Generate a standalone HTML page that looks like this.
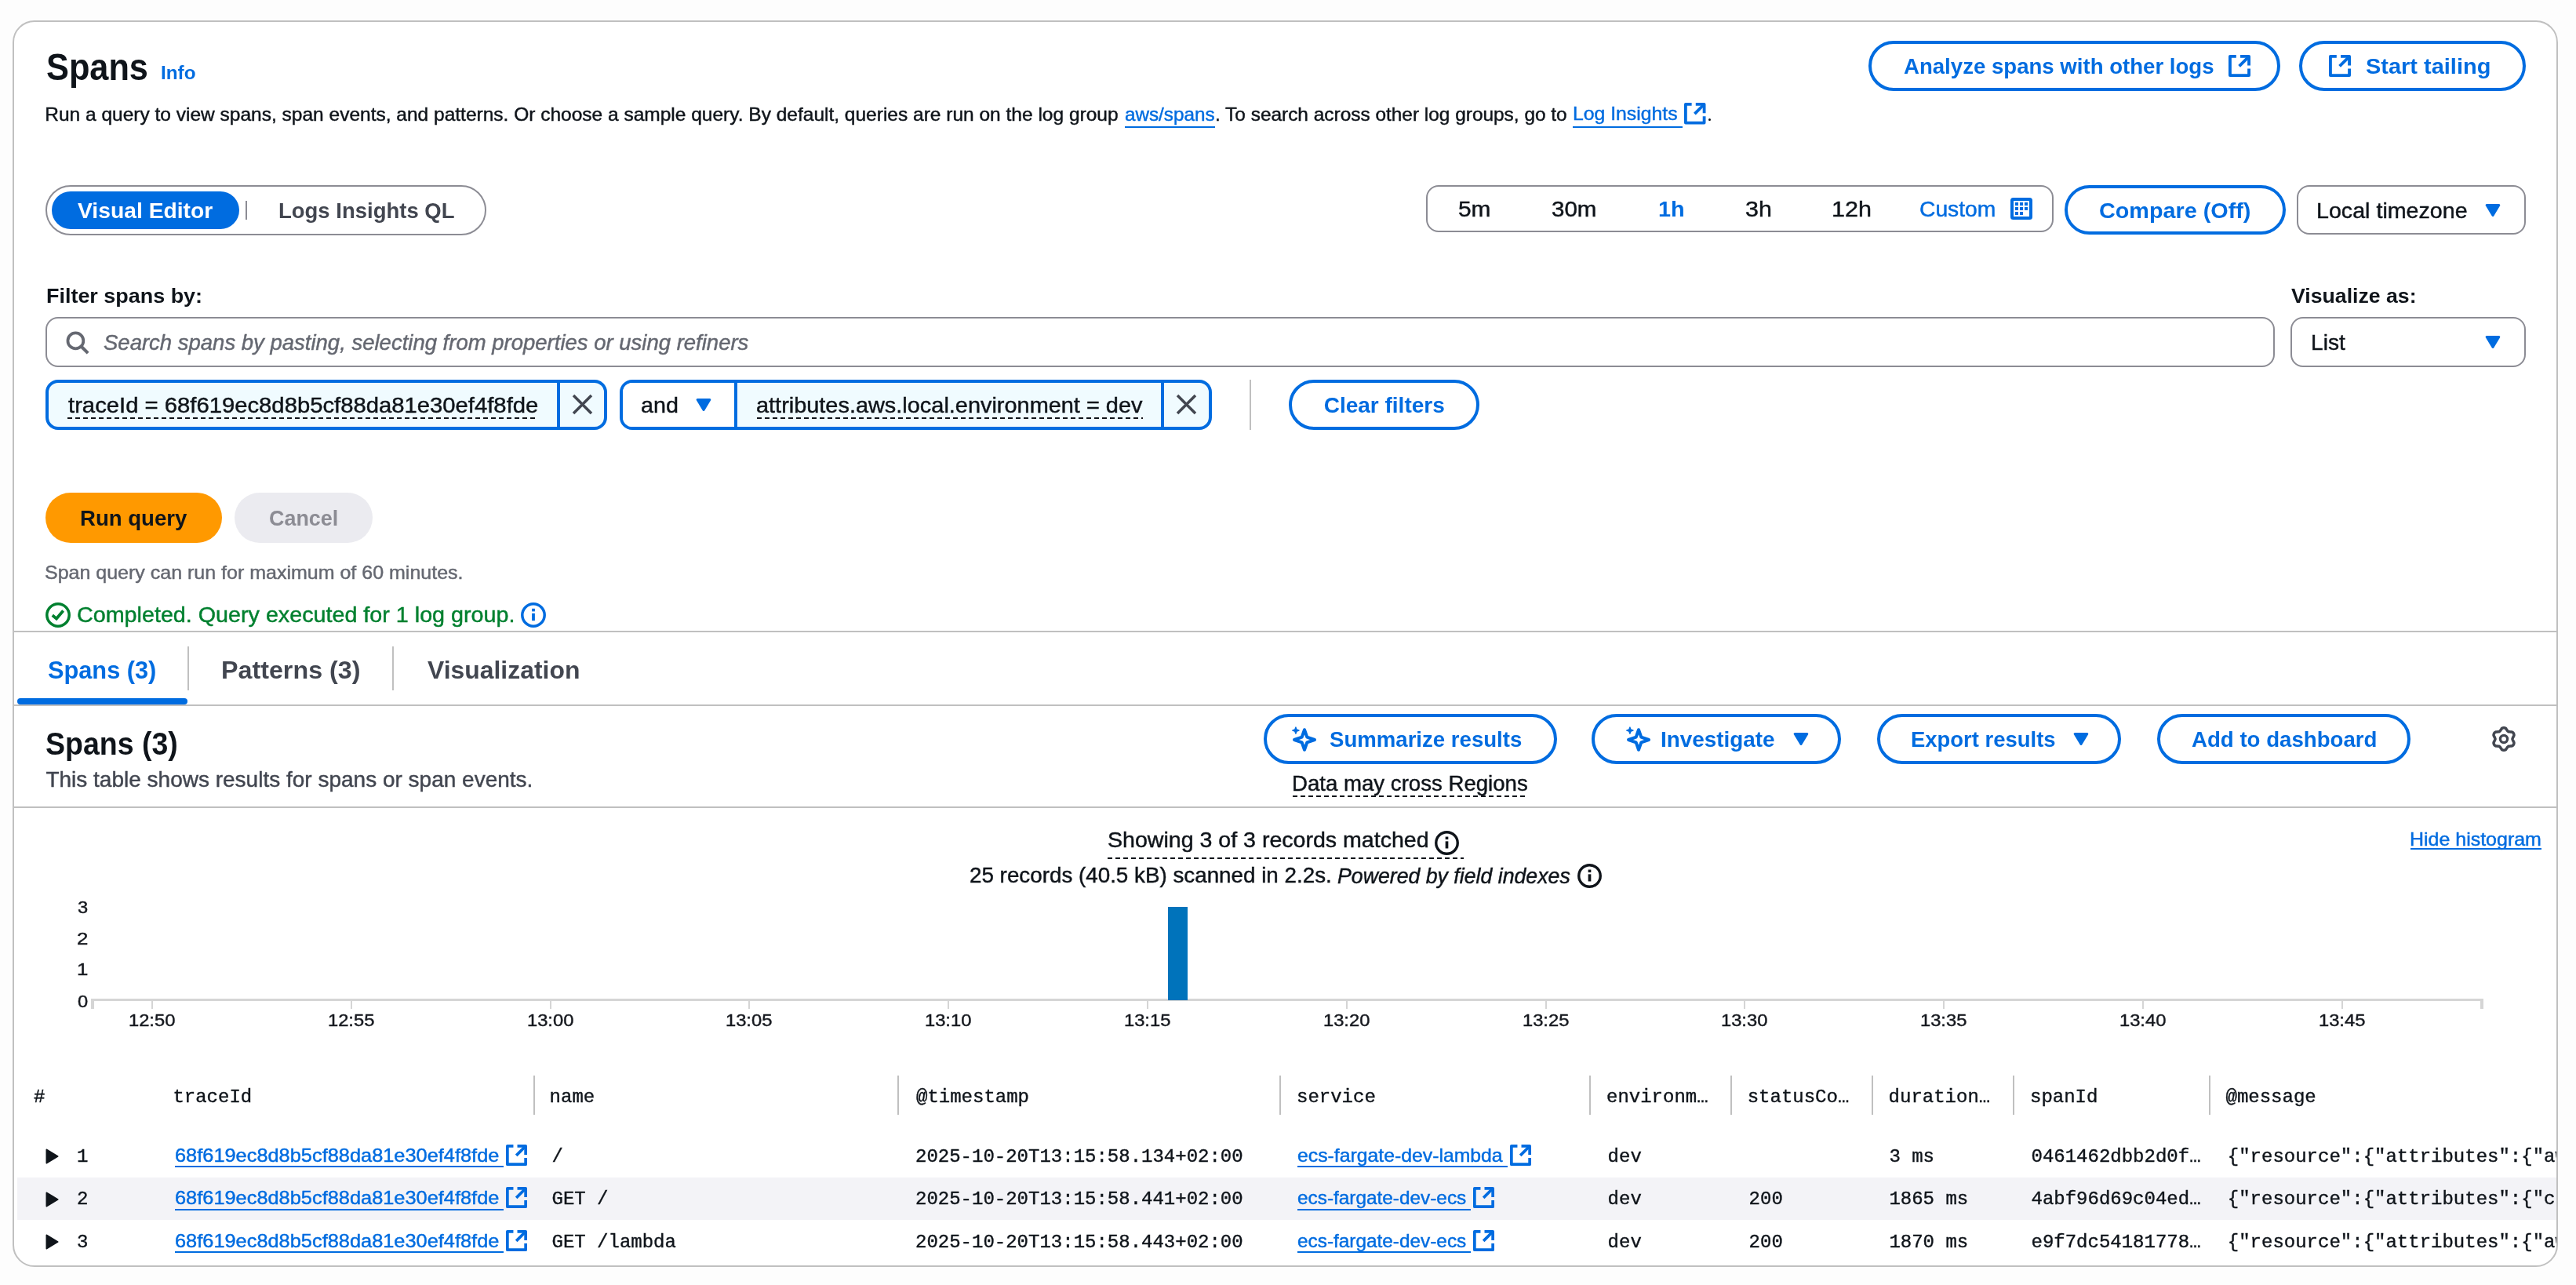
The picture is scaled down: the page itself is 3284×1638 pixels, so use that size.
<!DOCTYPE html>
<html><head><meta charset="utf-8"><title>Spans</title>
<style>
html,body{margin:0;padding:0;}
body{width:3284px;height:1638px;position:relative;overflow:hidden;background:#fdfdfd;font-family:"Liberation Sans",sans-serif;}
#wrap{position:absolute;left:0;top:0;width:3284px;height:1638px;will-change:transform;}
</style></head><body>
<div id="wrap"><div style="position:absolute;left:16px;top:26px;width:3245px;height:1589px;box-sizing:border-box;border:2px solid #c0c0c0;border-radius:28px;background:#fff;"></div><div style="position:absolute;left:59.10px;top:62.16px;font:normal 700 48px/48px 'Liberation Sans';color:#0f141a;white-space:pre;transform:scaleX(0.9020);transform-origin:0 0;">Spans</div><div style="position:absolute;left:204.74px;top:82.43px;font:normal 700 23px/23px 'Liberation Sans';color:#006ce0;white-space:pre;transform:scaleX(1.0560);transform-origin:0 0;">Info</div><div style="position:absolute;left:57.29px;top:133.56px;font:normal 400 24.5px/24.5px 'Liberation Sans';color:#0f141a;white-space:pre;-webkit-text-stroke:0.45px #0f141a;">Run a query to view spans, span events, and patterns. Or choose a sample query. By default, queries are run on the log group </div><div style="position:absolute;left:1434.01px;top:133.56px;font:normal 400 24.5px/24.5px 'Liberation Sans';color:#006ce0;white-space:pre;transform:scaleX(0.9895);transform-origin:0 0;-webkit-text-stroke:0.45px #006ce0;">aws/spans</div><div style="position:absolute;left:1434px;top:161px;width:115px;height:2px;background:#006ce0"></div><div style="position:absolute;left:1549.01px;top:133.56px;font:normal 400 24.5px/24.5px 'Liberation Sans';color:#0f141a;white-space:pre;transform:scaleX(0.9963);transform-origin:0 0;-webkit-text-stroke:0.45px #0f141a;">. To search across other log groups, go to</div><div style="position:absolute;left:2004.68px;top:133.36px;font:normal 400 24.5px/24.5px 'Liberation Sans';color:#006ce0;white-space:pre;transform:scaleX(1.0110);transform-origin:0 0;-webkit-text-stroke:0.45px #006ce0;">Log Insights</div><div style="position:absolute;left:2005px;top:161px;width:140px;height:2px;background:#006ce0"></div><svg style="position:absolute;left:2147px;top:131px;" width="27.5" height="27.5" viewBox="0 0 16 16"><g fill="none" stroke="#006ce0" stroke-width="2.2" stroke-linejoin="round"><path d="M5.6 1.1H1.1v13.8h13.8V10"/><path d="M8.6 1.1h6.3v6.6"/><path d="M7.8 8.2l6.6-6.6"/></g></svg><div style="position:absolute;left:2178px;top:151px;width:3px;height:3px;background:#0f141a;border-radius:2px"></div><div style="position:absolute;left:2382px;top:52px;width:525px;height:64px;box-sizing:border-box;border:4px solid #006ce0;border-radius:32.0px;background:#fff"></div><div style="position:absolute;left:2426.60px;top:70.59px;font:normal 700 28px/28px 'Liberation Sans';color:#006ce0;white-space:pre;transform:scaleX(0.9854);transform-origin:0 0;">Analyze spans with other logs</div><svg style="position:absolute;left:2841px;top:70px;" width="28" height="28" viewBox="0 0 16 16"><g fill="none" stroke="#006ce0" stroke-width="2.2" stroke-linejoin="round"><path d="M5.6 1.1H1.1v13.8h13.8V10"/><path d="M8.6 1.1h6.3v6.6"/><path d="M7.8 8.2l6.6-6.6"/></g></svg><div style="position:absolute;left:2931px;top:52px;width:289px;height:64px;box-sizing:border-box;border:4px solid #006ce0;border-radius:32.0px;background:#fff"></div><svg style="position:absolute;left:2969px;top:70px;" width="28" height="28" viewBox="0 0 16 16"><g fill="none" stroke="#006ce0" stroke-width="2.2" stroke-linejoin="round"><path d="M5.6 1.1H1.1v13.8h13.8V10"/><path d="M8.6 1.1h6.3v6.6"/><path d="M7.8 8.2l6.6-6.6"/></g></svg><div style="position:absolute;left:3016.30px;top:70.69px;font:normal 700 28px/28px 'Liberation Sans';color:#006ce0;white-space:pre;transform:scaleX(1.0346);transform-origin:0 0;">Start tailing</div><div style="position:absolute;left:58px;top:236px;width:562px;height:64px;box-sizing:border-box;border:2px solid #8c8c94;border-radius:32px;background:#fff"></div><div style="position:absolute;left:66px;top:244px;width:239px;height:48px;background:#006ce0;border-radius:24px"></div><div style="position:absolute;left:99.40px;top:254.59px;font:normal 700 28px/28px 'Liberation Sans';color:#fff;white-space:pre;transform:scaleX(1.0097);transform-origin:0 0;">Visual Editor</div><div style="position:absolute;left:313px;top:256px;width:2px;height:24px;background:#8c8c94"></div><div style="position:absolute;left:354.62px;top:254.59px;font:normal 700 28px/28px 'Liberation Sans';color:#424650;white-space:pre;transform:scaleX(0.9817);transform-origin:0 0;">Logs Insights QL</div><div style="position:absolute;left:1818px;top:236px;width:800px;height:60px;box-sizing:border-box;border:2px solid #8c8c94;border-radius:16px;background:#fff"></div><div style="position:absolute;left:1858.93px;top:252.59px;font:normal 400 28px/28px 'Liberation Sans';color:#0f141a;white-space:pre;transform:scaleX(1.0664);transform-origin:0 0;-webkit-text-stroke:0.45px #0f141a;">5m</div><div style="position:absolute;left:1978.25px;top:252.59px;font:normal 400 28px/28px 'Liberation Sans';color:#0f141a;white-space:pre;transform:scaleX(1.0548);transform-origin:0 0;-webkit-text-stroke:0.45px #0f141a;">30m</div><div style="position:absolute;left:2113.97px;top:252.59px;font:normal 700 28px/28px 'Liberation Sans';color:#006ce0;white-space:pre;transform:scaleX(1.0303);transform-origin:0 0;">1h</div><div style="position:absolute;left:2224.92px;top:252.59px;font:normal 400 28px/28px 'Liberation Sans';color:#0f141a;white-space:pre;transform:scaleX(1.0850);transform-origin:0 0;-webkit-text-stroke:0.45px #0f141a;">3h</div><div style="position:absolute;left:2334.82px;top:252.59px;font:normal 400 28px/28px 'Liberation Sans';color:#0f141a;white-space:pre;transform:scaleX(1.0894);transform-origin:0 0;-webkit-text-stroke:0.45px #0f141a;">12h</div><div style="position:absolute;left:2446.99px;top:252.59px;font:normal 400 28px/28px 'Liberation Sans';color:#006ce0;white-space:pre;transform:scaleX(1.0091);transform-origin:0 0;-webkit-text-stroke:0.45px #006ce0;">Custom</div><svg style="position:absolute;left:2563px;top:252px;" width="28" height="28" viewBox="0 0 28 28"><rect x="2" y="2" width="24" height="24" rx="1.5" fill="none" stroke="#006ce0" stroke-width="4"/><rect x="6" y="6" width="4" height="4" fill="#006ce0"/><rect x="12" y="6" width="4" height="4" fill="#006ce0"/><rect x="18" y="6" width="4" height="4" fill="#006ce0"/><rect x="6" y="12" width="4" height="4" fill="#006ce0"/><rect x="12" y="12" width="4" height="4" fill="#006ce0"/><rect x="18" y="12" width="4" height="4" fill="#006ce0"/><rect x="6" y="18" width="4" height="4" fill="#006ce0"/><rect x="12" y="18" width="4" height="4" fill="#006ce0"/></svg><div style="position:absolute;left:2632px;top:236px;width:282px;height:63px;box-sizing:border-box;border:4px solid #006ce0;border-radius:31.5px;background:#fff"></div><div style="position:absolute;left:2675.97px;top:254.59px;font:normal 700 28px/28px 'Liberation Sans';color:#006ce0;white-space:pre;transform:scaleX(1.0275);transform-origin:0 0;">Compare (Off)</div><div style="position:absolute;left:2928px;top:236px;width:292px;height:63px;box-sizing:border-box;border:2px solid #8c8c94;border-radius:16px;background:#fff"></div><div style="position:absolute;left:2952.95px;top:254.59px;font:normal 400 28px/28px 'Liberation Sans';color:#0f141a;white-space:pre;transform:scaleX(1.0228);transform-origin:0 0;-webkit-text-stroke:0.45px #0f141a;">Local timezone</div><svg style="position:absolute;left:3168px;top:260px;" width="20" height="16" viewBox="0 0 20 16"><path d="M2.2 1.5 H17.8 L10 14.5 Z" fill="#006ce0" stroke="#006ce0" stroke-width="3" stroke-linejoin="round"/></svg><div style="position:absolute;left:58.78px;top:363.86px;font:normal 700 26.5px/26.5px 'Liberation Sans';color:#0f141a;white-space:pre;transform:scaleX(1.0164);transform-origin:0 0;">Filter spans by:</div><div style="position:absolute;left:2921.30px;top:363.86px;font:normal 700 26.5px/26.5px 'Liberation Sans';color:#0f141a;white-space:pre;transform:scaleX(1.0059);transform-origin:0 0;">Visualize as:</div><div style="position:absolute;left:58px;top:404px;width:2842px;height:64px;box-sizing:border-box;border:2px solid #8c8c94;border-radius:16px;background:#fff"></div><svg style="position:absolute;left:84px;top:422px;" width="30" height="30" viewBox="0 0 16 16"><circle cx="6.6" cy="6.6" r="5.3" fill="none" stroke="#656871" stroke-width="2"/><path d="M10.5 10.5L15 15" stroke="#656871" stroke-width="2.2"/></svg><div style="position:absolute;left:132.00px;top:423.22px;font:italic 400 27.5px/27.5px 'Liberation Sans';color:#656871;white-space:pre;-webkit-text-stroke:0.45px #656871;">Search spans by pasting, selecting from properties or using refiners</div><div style="position:absolute;left:2920px;top:404px;width:300px;height:64px;box-sizing:border-box;border:2px solid #8c8c94;border-radius:16px;background:#fff"></div><div style="position:absolute;left:2945.69px;top:422.59px;font:normal 400 28px/28px 'Liberation Sans';color:#0f141a;white-space:pre;transform:scaleX(1.0050);transform-origin:0 0;-webkit-text-stroke:0.45px #0f141a;">List</div><svg style="position:absolute;left:3168px;top:428px;" width="20" height="16" viewBox="0 0 20 16"><path d="M2.2 1.5 H17.8 L10 14.5 Z" fill="#006ce0" stroke="#006ce0" stroke-width="3" stroke-linejoin="round"/></svg><div style="position:absolute;left:58px;top:484px;width:716px;height:64px;box-sizing:border-box;border:4px solid #006ce0;border-radius:16px;background:#f0fbff"></div><div style="position:absolute;left:710px;top:484px;width:4px;height:64px;background:#006ce0"></div><div style="position:absolute;left:86.60px;top:502.59px;font:normal 400 28px/28px 'Liberation Sans';color:#0f141a;white-space:pre;transform:scaleX(1.0446);transform-origin:0 0;-webkit-text-stroke:0.45px #0f141a;">traceId = 68f619ec8d8b5cf88da81e30ef4f8fde</div><div style="position:absolute;left:86px;top:532px;width:600px;height:2px;background:repeating-linear-gradient(90deg,#0f141a 0 6px,transparent 6px 10px)"></div><svg style="position:absolute;left:728.5px;top:501.5px;" width="27" height="27" viewBox="0 0 16 16"><path d="M1.2 1.2L14.8 14.8M14.8 1.2L1.2 14.8" stroke="#424650" stroke-width="2.1" fill="none"/></svg><div style="position:absolute;left:790px;top:484px;width:755px;height:64px;box-sizing:border-box;border:4px solid #006ce0;border-radius:16px;background:#f0fbff"></div><div style="position:absolute;left:794px;top:488px;width:144px;height:56px;background:#fff;border-radius:12px 0 0 12px"></div><div style="position:absolute;left:936px;top:484px;width:4px;height:64px;background:#006ce0"></div><div style="position:absolute;left:1480px;top:484px;width:4px;height:64px;background:#006ce0"></div><div style="position:absolute;left:816.78px;top:502.59px;font:normal 400 28px/28px 'Liberation Sans';color:#0f141a;white-space:pre;transform:scaleX(1.0239);transform-origin:0 0;-webkit-text-stroke:0.45px #0f141a;">and</div><svg style="position:absolute;left:887px;top:508px;" width="20" height="16" viewBox="0 0 20 16"><path d="M2.2 1.5 H17.8 L10 14.5 Z" fill="#006ce0" stroke="#006ce0" stroke-width="3" stroke-linejoin="round"/></svg><div style="position:absolute;left:964.27px;top:502.59px;font:normal 400 28px/28px 'Liberation Sans';color:#0f141a;white-space:pre;transform:scaleX(1.0323);transform-origin:0 0;-webkit-text-stroke:0.45px #0f141a;">attributes.aws.local.environment = dev</div><div style="position:absolute;left:965px;top:532px;width:492px;height:2px;background:repeating-linear-gradient(90deg,#0f141a 0 6px,transparent 6px 10px)"></div><svg style="position:absolute;left:1499.2px;top:501.5px;" width="27" height="27" viewBox="0 0 16 16"><path d="M1.2 1.2L14.8 14.8M14.8 1.2L1.2 14.8" stroke="#424650" stroke-width="2.1" fill="none"/></svg><div style="position:absolute;left:1593px;top:484px;width:2px;height:64px;background:#c0c0c0"></div><div style="position:absolute;left:1643px;top:484px;width:243px;height:64px;box-sizing:border-box;border:4px solid #006ce0;border-radius:32.0px;background:#fff"></div><div style="position:absolute;left:1687.70px;top:502.59px;font:normal 700 28px/28px 'Liberation Sans';color:#006ce0;white-space:pre;">Clear filters</div><div style="position:absolute;left:58px;top:628px;width:225px;height:64px;background:#ff9900;border-radius:32px"></div><div style="position:absolute;left:101.82px;top:646.79px;font:normal 700 28px/28px 'Liberation Sans';color:#0f141a;white-space:pre;transform:scaleX(0.9849);transform-origin:0 0;">Run query</div><div style="position:absolute;left:299px;top:628px;width:176px;height:64px;background:#ebebf0;border-radius:32px"></div><div style="position:absolute;left:343.44px;top:646.79px;font:normal 700 28px/28px 'Liberation Sans';color:#8c8c94;white-space:pre;transform:scaleX(0.9614);transform-origin:0 0;">Cancel</div><div style="position:absolute;left:57.38px;top:717.56px;font:normal 400 24.5px/24.5px 'Liberation Sans';color:#656871;white-space:pre;transform:scaleX(1.0202);transform-origin:0 0;-webkit-text-stroke:0.45px #656871;">Span query can run for maximum of 60 minutes.</div><div style="position:absolute;left:0;top:0;width:3284px;height:804px;overflow:hidden"><svg style="position:absolute;left:58px;top:768px;" width="32" height="32" viewBox="0 0 16 16"><circle cx="8" cy="8" r="7.1" fill="none" stroke="#00802f" stroke-width="1.75"/><path d="M4.4 8.1L7 10.3L11.3 5.3" fill="none" stroke="#00802f" stroke-width="1.9"/></svg><div style="position:absolute;left:98.37px;top:769.59px;font:normal 400 28px/28px 'Liberation Sans';color:#00802f;white-space:pre;transform:scaleX(1.0251);transform-origin:0 0;-webkit-text-stroke:0.45px #00802f;">Completed. Query executed for 1 log group.</div><svg style="position:absolute;left:664px;top:768px;" width="32" height="32" viewBox="0 0 16 16"><circle cx="8" cy="8" r="7.1" fill="none" stroke="#006ce0" stroke-width="1.75"/><rect x="7.05" y="3.9" width="1.9" height="1.8" fill="#006ce0"/><rect x="7.05" y="6.9" width="1.9" height="4.7" fill="#006ce0"/></svg></div><div style="position:absolute;left:16px;top:804px;width:3245px;height:2px;background:#c0c0c0"></div><div style="position:absolute;left:61.00px;top:838.75px;font:normal 700 31px/31px 'Liberation Sans';color:#006ce0;white-space:pre;transform:scaleX(0.9913);transform-origin:0 0;">Spans (3)</div><div style="position:absolute;left:239px;top:824px;width:2px;height:56px;background:#c0c0c0"></div><div style="position:absolute;left:282.42px;top:838.75px;font:normal 700 31px/31px 'Liberation Sans';color:#424650;white-space:pre;transform:scaleX(1.0405);transform-origin:0 0;">Patterns (3)</div><div style="position:absolute;left:500px;top:824px;width:2px;height:56px;background:#c0c0c0"></div><div style="position:absolute;left:544.50px;top:838.75px;font:normal 700 31px/31px 'Liberation Sans';color:#424650;white-space:pre;transform:scaleX(1.0288);transform-origin:0 0;">Visualization</div><div style="position:absolute;left:22px;top:890px;width:217px;height:8px;background:#006ce0;border-radius:4px"></div><div style="position:absolute;left:16px;top:898px;width:3245px;height:2px;background:#c0c0c0"></div><div style="position:absolute;left:58.26px;top:927.93px;font:normal 700 40px/40px 'Liberation Sans';color:#0f141a;white-space:pre;transform:scaleX(0.9374);transform-origin:0 0;">Spans (3)</div><div style="position:absolute;left:58.40px;top:980.39px;font:normal 400 28px/28px 'Liberation Sans';color:#424650;white-space:pre;-webkit-text-stroke:0.45px #424650;">This table shows results for spans or span events.</div><div style="position:absolute;left:1611px;top:910px;width:374px;height:64px;box-sizing:border-box;border:4px solid #006ce0;border-radius:32.0px;background:#fff"></div><svg style="position:absolute;left:1642.9px;top:922.9px;" width="40" height="40" viewBox="0 0 40 40"><path d="M20 7.25 L23.3 16.7 L33 20 L23.3 23.3 L20 32.75 L16.7 23.3 L7 20 L16.7 16.7 Z" fill="none" stroke="#006ce0" stroke-width="4" stroke-linejoin="round"/><path d="M8.9 3.9 L10.1 6.9 L13.1 8.1 L10.1 9.3 L8.9 12.3 L7.7 9.3 L4.7 8.1 L7.7 6.9 Z" fill="#006ce0" stroke="#006ce0" stroke-width="1.2" stroke-linejoin="round"/></svg><div style="position:absolute;left:1695.00px;top:928.59px;font:normal 700 28px/28px 'Liberation Sans';color:#006ce0;white-space:pre;transform:scaleX(0.9850);transform-origin:0 0;">Summarize results</div><div style="position:absolute;left:2029px;top:910px;width:318px;height:64px;box-sizing:border-box;border:4px solid #006ce0;border-radius:32.0px;background:#fff"></div><svg style="position:absolute;left:2068.9px;top:922.8px;" width="40" height="40" viewBox="0 0 40 40"><path d="M20 7.25 L23.3 16.7 L33 20 L23.3 23.3 L20 32.75 L16.7 23.3 L7 20 L16.7 16.7 Z" fill="none" stroke="#006ce0" stroke-width="4" stroke-linejoin="round"/><path d="M8.9 3.9 L10.1 6.9 L13.1 8.1 L10.1 9.3 L8.9 12.3 L7.7 9.3 L4.7 8.1 L7.7 6.9 Z" fill="#006ce0" stroke="#006ce0" stroke-width="1.2" stroke-linejoin="round"/></svg><div style="position:absolute;left:2117.00px;top:928.59px;font:normal 700 28px/28px 'Liberation Sans';color:#006ce0;white-space:pre;transform:scaleX(0.9951);transform-origin:0 0;">Investigate</div><svg style="position:absolute;left:2286px;top:934px;" width="20" height="16" viewBox="0 0 20 16"><path d="M2.2 1.5 H17.8 L10 14.5 Z" fill="#006ce0" stroke="#006ce0" stroke-width="3" stroke-linejoin="round"/></svg><div style="position:absolute;left:2393px;top:910px;width:311px;height:64px;box-sizing:border-box;border:4px solid #006ce0;border-radius:32.0px;background:#fff"></div><div style="position:absolute;left:2436.02px;top:928.59px;font:normal 700 28px/28px 'Liberation Sans';color:#006ce0;white-space:pre;transform:scaleX(0.9802);transform-origin:0 0;">Export results</div><svg style="position:absolute;left:2643px;top:934px;" width="20" height="16" viewBox="0 0 20 16"><path d="M2.2 1.5 H17.8 L10 14.5 Z" fill="#006ce0" stroke="#006ce0" stroke-width="3" stroke-linejoin="round"/></svg><div style="position:absolute;left:2750px;top:910px;width:323px;height:64px;box-sizing:border-box;border:4px solid #006ce0;border-radius:32.0px;background:#fff"></div><div style="position:absolute;left:2793.60px;top:928.59px;font:normal 700 28px/28px 'Liberation Sans';color:#006ce0;white-space:pre;transform:scaleX(0.9872);transform-origin:0 0;">Add to dashboard</div><svg style="position:absolute;left:3172px;top:922px;" width="40" height="40" viewBox="0 0 40 40"><path d="M31.00 20.00 L31.06 19.52 L31.24 19.02 L31.50 18.49 L31.80 17.92 L32.07 17.32 L32.22 16.73 L32.81 15.96 L32.95 15.29 L32.95 14.64 L32.85 14.01 L32.66 13.41 L32.38 12.85 L32.03 12.33 L31.61 11.87 L31.12 11.47 L30.55 11.14 L29.91 10.92 L28.94 11.06 L28.35 10.88 L27.70 10.82 L27.06 10.80 L26.47 10.76 L25.95 10.66 L25.50 10.47 L25.11 10.18 L24.77 9.78 L24.44 9.28 L24.10 8.74 L23.72 8.21 L23.27 7.78 L22.91 6.88 L22.39 6.43 L21.83 6.11 L21.24 5.88 L20.62 5.74 L20.00 5.70 L19.38 5.74 L18.76 5.88 L18.17 6.11 L17.61 6.43 L17.09 6.88 L16.73 7.78 L16.28 8.21 L15.90 8.74 L15.56 9.28 L15.23 9.78 L14.89 10.18 L14.50 10.47 L14.05 10.66 L13.53 10.76 L12.94 10.80 L12.30 10.82 L11.65 10.88 L11.06 11.06 L10.09 10.92 L9.45 11.14 L8.88 11.47 L8.39 11.87 L7.97 12.33 L7.62 12.85 L7.34 13.41 L7.15 14.01 L7.05 14.64 L7.05 15.29 L7.19 15.96 L7.78 16.73 L7.93 17.32 L8.20 17.92 L8.50 18.49 L8.76 19.02 L8.94 19.52 L9.00 20.00 L8.94 20.48 L8.76 20.98 L8.50 21.51 L8.20 22.08 L7.93 22.68 L7.78 23.27 L7.19 24.04 L7.05 24.71 L7.05 25.36 L7.15 25.99 L7.34 26.59 L7.62 27.15 L7.97 27.67 L8.39 28.13 L8.88 28.53 L9.45 28.86 L10.09 29.08 L11.06 28.94 L11.65 29.12 L12.30 29.18 L12.94 29.20 L13.53 29.24 L14.05 29.34 L14.50 29.53 L14.89 29.82 L15.23 30.22 L15.56 30.72 L15.90 31.26 L16.28 31.79 L16.73 32.22 L17.09 33.12 L17.61 33.57 L18.17 33.89 L18.76 34.12 L19.38 34.26 L20.00 34.30 L20.62 34.26 L21.24 34.12 L21.83 33.89 L22.39 33.57 L22.91 33.12 L23.27 32.22 L23.72 31.79 L24.10 31.26 L24.44 30.72 L24.77 30.22 L25.11 29.82 L25.50 29.53 L25.95 29.34 L26.47 29.24 L27.06 29.20 L27.70 29.18 L28.35 29.12 L28.94 28.94 L29.91 29.08 L30.55 28.86 L31.12 28.53 L31.61 28.13 L32.03 27.67 L32.38 27.15 L32.66 26.59 L32.85 25.99 L32.95 25.36 L32.95 24.71 L32.81 24.04 L32.22 23.27 L32.07 22.68 L31.80 22.08 L31.50 21.51 L31.24 20.98 L31.06 20.48 Z" fill="none" stroke="#424650" stroke-width="3.5" stroke-linejoin="round"/><circle cx="20" cy="20" r="4.6" fill="none" stroke="#424650" stroke-width="3.3"/></svg><div style="position:absolute;left:1646.99px;top:984.62px;font:normal 400 27.5px/27.5px 'Liberation Sans';color:#0f141a;white-space:pre;transform:scaleX(1.0040);transform-origin:0 0;-webkit-text-stroke:0.45px #0f141a;">Data may cross Regions</div><div style="position:absolute;left:1648px;top:1014px;width:300px;height:2px;background:repeating-linear-gradient(90deg,#0f141a 0 6px,transparent 6px 10px)"></div><div style="position:absolute;left:16px;top:1028px;width:3245px;height:2px;background:#c0c0c0"></div><div style="position:absolute;left:1411.98px;top:1056.59px;font:normal 400 28px/28px 'Liberation Sans';color:#0f141a;white-space:pre;transform:scaleX(1.0201);transform-origin:0 0;-webkit-text-stroke:0.45px #0f141a;">Showing 3 of 3 records matched</div><svg style="position:absolute;left:1829px;top:1059px;" width="31" height="31" viewBox="0 0 16 16"><circle cx="8" cy="8" r="7.1" fill="none" stroke="#0f141a" stroke-width="1.75"/><rect x="7.05" y="3.9" width="1.9" height="1.8" fill="#0f141a"/><rect x="7.05" y="6.9" width="1.9" height="4.7" fill="#0f141a"/></svg><div style="position:absolute;left:1412px;top:1093px;width:454px;height:2px;background:repeating-linear-gradient(90deg,#0f141a 0 6px,transparent 6px 10px)"></div><div style="position:absolute;left:1235.71px;top:1102.19px;font:normal 400 28px/28px 'Liberation Sans';color:#0f141a;white-space:pre;transform:scaleX(0.9923);transform-origin:0 0;-webkit-text-stroke:0.45px #0f141a;">25 records (40.5 kB) scanned in 2.2s.</div><div style="position:absolute;left:1705.00px;top:1102.62px;font:italic 400 27.5px/27.5px 'Liberation Sans';color:#0f141a;white-space:pre;transform:scaleX(0.9706);transform-origin:0 0;-webkit-text-stroke:0.45px #0f141a;">Powered by field indexes</div><svg style="position:absolute;left:2011px;top:1101px;" width="31" height="31" viewBox="0 0 16 16"><circle cx="8" cy="8" r="7.1" fill="none" stroke="#0f141a" stroke-width="1.75"/><rect x="7.05" y="3.9" width="1.9" height="1.8" fill="#0f141a"/><rect x="7.05" y="6.9" width="1.9" height="4.7" fill="#0f141a"/></svg><div style="position:absolute;left:3071.86px;top:1058.26px;font:normal 400 24.5px/24.5px 'Liberation Sans';color:#006ce0;white-space:pre;transform:scaleX(1.0189);transform-origin:0 0;-webkit-text-stroke:0.45px #006ce0;">Hide histogram</div><div style="position:absolute;left:3073px;top:1081px;width:167px;height:2px;background:#006ce0"></div><div style="position:absolute;left:98.90px;top:1145.67px;font:normal 400 22px/22px 'Liberation Sans';color:#16191f;white-space:pre;transform:scaleX(1.0750);transform-origin:0 0;-webkit-text-stroke:0.45px #16191f;">3</div><div style="position:absolute;left:97.73px;top:1185.67px;font:normal 400 22px/22px 'Liberation Sans';color:#16191f;white-space:pre;transform:scaleX(1.1727);transform-origin:0 0;-webkit-text-stroke:0.45px #16191f;">2</div><div style="position:absolute;left:97.73px;top:1225.07px;font:normal 400 22px/22px 'Liberation Sans';color:#16191f;white-space:pre;transform:scaleX(1.1727);transform-origin:0 0;-webkit-text-stroke:0.45px #16191f;">1</div><div style="position:absolute;left:98.90px;top:1265.67px;font:normal 400 22px/22px 'Liberation Sans';color:#16191f;white-space:pre;transform:scaleX(1.0750);transform-origin:0 0;-webkit-text-stroke:0.45px #16191f;">0</div><div style="position:absolute;left:116px;top:1273px;width:3050px;height:3px;background:#d5d5d5"></div><div style="position:absolute;left:116px;top:1273px;width:4px;height:13px;background:#d5d5d5"></div><div style="position:absolute;left:3162px;top:1273px;width:4px;height:13px;background:#d5d5d5"></div><div style="position:absolute;left:193px;top:1276px;width:2px;height:10px;background:#d5d5d5"></div><div style="position:absolute;left:163.92px;top:1290.27px;font:normal 400 22px/22px 'Liberation Sans';color:#16191f;white-space:pre;transform:scaleX(1.0777);transform-origin:0 0;-webkit-text-stroke:0.45px #16191f;">12:50</div><div style="position:absolute;left:447px;top:1276px;width:2px;height:10px;background:#d5d5d5"></div><div style="position:absolute;left:417.72px;top:1290.27px;font:normal 400 22px/22px 'Liberation Sans';color:#16191f;white-space:pre;transform:scaleX(1.0777);transform-origin:0 0;-webkit-text-stroke:0.45px #16191f;">12:55</div><div style="position:absolute;left:701px;top:1276px;width:2px;height:10px;background:#d5d5d5"></div><div style="position:absolute;left:671.52px;top:1290.27px;font:normal 400 22px/22px 'Liberation Sans';color:#16191f;white-space:pre;transform:scaleX(1.0777);transform-origin:0 0;-webkit-text-stroke:0.45px #16191f;">13:00</div><div style="position:absolute;left:954px;top:1276px;width:2px;height:10px;background:#d5d5d5"></div><div style="position:absolute;left:925.32px;top:1290.27px;font:normal 400 22px/22px 'Liberation Sans';color:#16191f;white-space:pre;transform:scaleX(1.0777);transform-origin:0 0;-webkit-text-stroke:0.45px #16191f;">13:05</div><div style="position:absolute;left:1208px;top:1276px;width:2px;height:10px;background:#d5d5d5"></div><div style="position:absolute;left:1179.12px;top:1290.27px;font:normal 400 22px/22px 'Liberation Sans';color:#16191f;white-space:pre;transform:scaleX(1.0777);transform-origin:0 0;-webkit-text-stroke:0.45px #16191f;">13:10</div><div style="position:absolute;left:1462px;top:1276px;width:2px;height:10px;background:#d5d5d5"></div><div style="position:absolute;left:1432.92px;top:1290.27px;font:normal 400 22px/22px 'Liberation Sans';color:#16191f;white-space:pre;transform:scaleX(1.0777);transform-origin:0 0;-webkit-text-stroke:0.45px #16191f;">13:15</div><div style="position:absolute;left:1716px;top:1276px;width:2px;height:10px;background:#d5d5d5"></div><div style="position:absolute;left:1686.72px;top:1290.27px;font:normal 400 22px/22px 'Liberation Sans';color:#16191f;white-space:pre;transform:scaleX(1.0777);transform-origin:0 0;-webkit-text-stroke:0.45px #16191f;">13:20</div><div style="position:absolute;left:1970px;top:1276px;width:2px;height:10px;background:#d5d5d5"></div><div style="position:absolute;left:1940.52px;top:1290.27px;font:normal 400 22px/22px 'Liberation Sans';color:#16191f;white-space:pre;transform:scaleX(1.0777);transform-origin:0 0;-webkit-text-stroke:0.45px #16191f;">13:25</div><div style="position:absolute;left:2223px;top:1276px;width:2px;height:10px;background:#d5d5d5"></div><div style="position:absolute;left:2194.32px;top:1290.27px;font:normal 400 22px/22px 'Liberation Sans';color:#16191f;white-space:pre;transform:scaleX(1.0777);transform-origin:0 0;-webkit-text-stroke:0.45px #16191f;">13:30</div><div style="position:absolute;left:2477px;top:1276px;width:2px;height:10px;background:#d5d5d5"></div><div style="position:absolute;left:2448.12px;top:1290.27px;font:normal 400 22px/22px 'Liberation Sans';color:#16191f;white-space:pre;transform:scaleX(1.0777);transform-origin:0 0;-webkit-text-stroke:0.45px #16191f;">13:35</div><div style="position:absolute;left:2731px;top:1276px;width:2px;height:10px;background:#d5d5d5"></div><div style="position:absolute;left:2701.92px;top:1290.27px;font:normal 400 22px/22px 'Liberation Sans';color:#16191f;white-space:pre;transform:scaleX(1.0777);transform-origin:0 0;-webkit-text-stroke:0.45px #16191f;">13:40</div><div style="position:absolute;left:2985px;top:1276px;width:2px;height:10px;background:#d5d5d5"></div><div style="position:absolute;left:2955.72px;top:1290.27px;font:normal 400 22px/22px 'Liberation Sans';color:#16191f;white-space:pre;transform:scaleX(1.0777);transform-origin:0 0;-webkit-text-stroke:0.45px #16191f;">13:45</div><div style="position:absolute;left:1489px;top:1156px;width:25px;height:119px;background:#0073bb"></div><div style="position:absolute;left:43.00px;top:1387.21px;font:normal 400 24px/24px 'Liberation Mono';color:#0f141a;white-space:pre;-webkit-text-stroke:0.4px #0f141a;">#</div><div style="position:absolute;left:220.40px;top:1387.21px;font:normal 400 24px/24px 'Liberation Mono';color:#0f141a;white-space:pre;-webkit-text-stroke:0.4px #0f141a;">traceId</div><div style="position:absolute;left:700.60px;top:1387.21px;font:normal 400 24px/24px 'Liberation Mono';color:#0f141a;white-space:pre;-webkit-text-stroke:0.4px #0f141a;">name</div><div style="position:absolute;left:1168.00px;top:1387.21px;font:normal 400 24px/24px 'Liberation Mono';color:#0f141a;white-space:pre;-webkit-text-stroke:0.4px #0f141a;">@timestamp</div><div style="position:absolute;left:1653.00px;top:1387.21px;font:normal 400 24px/24px 'Liberation Mono';color:#0f141a;white-space:pre;-webkit-text-stroke:0.4px #0f141a;">service</div><div style="position:absolute;left:2048.00px;top:1387.21px;font:normal 400 24px/24px 'Liberation Mono';color:#0f141a;white-space:pre;-webkit-text-stroke:0.4px #0f141a;">environm…</div><div style="position:absolute;left:2227.70px;top:1387.21px;font:normal 400 24px/24px 'Liberation Mono';color:#0f141a;white-space:pre;-webkit-text-stroke:0.4px #0f141a;">statusCo…</div><div style="position:absolute;left:2407.60px;top:1387.21px;font:normal 400 24px/24px 'Liberation Mono';color:#0f141a;white-space:pre;-webkit-text-stroke:0.4px #0f141a;">duration…</div><div style="position:absolute;left:2588.00px;top:1387.21px;font:normal 400 24px/24px 'Liberation Mono';color:#0f141a;white-space:pre;-webkit-text-stroke:0.4px #0f141a;">spanId</div><div style="position:absolute;left:2837.50px;top:1387.21px;font:normal 400 24px/24px 'Liberation Mono';color:#0f141a;white-space:pre;-webkit-text-stroke:0.4px #0f141a;">@message</div><div style="position:absolute;left:680px;top:1371px;width:2px;height:50px;background:#c0c0c0"></div><div style="position:absolute;left:1144px;top:1371px;width:2px;height:50px;background:#c0c0c0"></div><div style="position:absolute;left:1631px;top:1371px;width:2px;height:50px;background:#c0c0c0"></div><div style="position:absolute;left:2026px;top:1371px;width:2px;height:50px;background:#c0c0c0"></div><div style="position:absolute;left:2206px;top:1371px;width:2px;height:50px;background:#c0c0c0"></div><div style="position:absolute;left:2386px;top:1371px;width:2px;height:50px;background:#c0c0c0"></div><div style="position:absolute;left:2566px;top:1371px;width:2px;height:50px;background:#c0c0c0"></div><div style="position:absolute;left:2816px;top:1371px;width:2px;height:50px;background:#c0c0c0"></div><div style="position:absolute;left:22px;top:1501px;width:3237px;height:54px;background:#f3f3f7"></div><svg style="position:absolute;left:58px;top:1464px;" width="17" height="20" viewBox="0 0 17 20"><path d="M1.5 1.5L15.5 10L1.5 18.5Z" fill="#0f141a" stroke="#0f141a" stroke-width="2" stroke-linejoin="round"/></svg><div style="position:absolute;left:98.00px;top:1462.61px;font:normal 400 24px/24px 'Liberation Mono';color:#0f141a;white-space:pre;-webkit-text-stroke:0.4px #0f141a;">1</div><div style="position:absolute;left:222.76px;top:1460.56px;font:normal 400 24.5px/24.5px 'Liberation Sans';color:#006ce0;white-space:pre;transform:scaleX(1.0356);transform-origin:0 0;-webkit-text-stroke:0.45px #006ce0;">68f619ec8d8b5cf88da81e30ef4f8fde</div><div style="position:absolute;left:223px;top:1486px;width:419px;height:2px;background:#006ce0"></div><svg style="position:absolute;left:645px;top:1458.5px;" width="27" height="27" viewBox="0 0 16 16"><g fill="none" stroke="#006ce0" stroke-width="2.2" stroke-linejoin="round"><path d="M5.6 1.1H1.1v13.8h13.8V10"/><path d="M8.6 1.1h6.3v6.6"/><path d="M7.8 8.2l6.6-6.6"/></g></svg><div style="position:absolute;left:703.50px;top:1462.61px;font:normal 400 24px/24px 'Liberation Mono';color:#0f141a;white-space:pre;-webkit-text-stroke:0.4px #0f141a;">/</div><div style="position:absolute;left:1167.00px;top:1462.61px;font:normal 400 24px/24px 'Liberation Mono';color:#0f141a;white-space:pre;-webkit-text-stroke:0.4px #0f141a;">2025-10-20T13:15:58.134+02:00</div><div style="position:absolute;left:1653.99px;top:1460.56px;font:normal 400 24.5px/24.5px 'Liberation Sans';color:#006ce0;white-space:pre;transform:scaleX(1.0112);transform-origin:0 0;-webkit-text-stroke:0.45px #006ce0;">ecs-fargate-dev-lambda</div><div style="position:absolute;left:1654px;top:1486px;width:268px;height:2px;background:#006ce0"></div><svg style="position:absolute;left:1925px;top:1458.5px;" width="27" height="27" viewBox="0 0 16 16"><g fill="none" stroke="#006ce0" stroke-width="2.2" stroke-linejoin="round"><path d="M5.6 1.1H1.1v13.8h13.8V10"/><path d="M8.6 1.1h6.3v6.6"/><path d="M7.8 8.2l6.6-6.6"/></g></svg><div style="position:absolute;left:2049.60px;top:1462.61px;font:normal 400 24px/24px 'Liberation Mono';color:#0f141a;white-space:pre;-webkit-text-stroke:0.4px #0f141a;">dev</div><div style="position:absolute;left:2408.40px;top:1462.61px;font:normal 400 24px/24px 'Liberation Mono';color:#0f141a;white-space:pre;-webkit-text-stroke:0.4px #0f141a;">3 ms</div><div style="position:absolute;left:2589.50px;top:1462.61px;font:normal 400 24px/24px 'Liberation Mono';color:#0f141a;white-space:pre;-webkit-text-stroke:0.4px #0f141a;">0461462dbb2d0f…</div><svg style="position:absolute;left:58px;top:1518.5px;" width="17" height="20" viewBox="0 0 17 20"><path d="M1.5 1.5L15.5 10L1.5 18.5Z" fill="#0f141a" stroke="#0f141a" stroke-width="2" stroke-linejoin="round"/></svg><div style="position:absolute;left:98.00px;top:1517.11px;font:normal 400 24px/24px 'Liberation Mono';color:#0f141a;white-space:pre;-webkit-text-stroke:0.4px #0f141a;">2</div><div style="position:absolute;left:222.76px;top:1515.06px;font:normal 400 24.5px/24.5px 'Liberation Sans';color:#006ce0;white-space:pre;transform:scaleX(1.0356);transform-origin:0 0;-webkit-text-stroke:0.45px #006ce0;">68f619ec8d8b5cf88da81e30ef4f8fde</div><div style="position:absolute;left:223px;top:1540.5px;width:419px;height:2.0px;background:#006ce0"></div><svg style="position:absolute;left:645px;top:1513.0px;" width="27" height="27" viewBox="0 0 16 16"><g fill="none" stroke="#006ce0" stroke-width="2.2" stroke-linejoin="round"><path d="M5.6 1.1H1.1v13.8h13.8V10"/><path d="M8.6 1.1h6.3v6.6"/><path d="M7.8 8.2l6.6-6.6"/></g></svg><div style="position:absolute;left:703.50px;top:1517.11px;font:normal 400 24px/24px 'Liberation Mono';color:#0f141a;white-space:pre;-webkit-text-stroke:0.4px #0f141a;">GET /</div><div style="position:absolute;left:1167.00px;top:1517.11px;font:normal 400 24px/24px 'Liberation Mono';color:#0f141a;white-space:pre;-webkit-text-stroke:0.4px #0f141a;">2025-10-20T13:15:58.441+02:00</div><div style="position:absolute;left:1654.01px;top:1515.06px;font:normal 400 24.5px/24.5px 'Liberation Sans';color:#006ce0;white-space:pre;transform:scaleX(0.9942);transform-origin:0 0;-webkit-text-stroke:0.45px #006ce0;">ecs-fargate-dev-ecs</div><div style="position:absolute;left:1654px;top:1540.5px;width:221px;height:2.0px;background:#006ce0"></div><svg style="position:absolute;left:1878px;top:1513.0px;" width="27" height="27" viewBox="0 0 16 16"><g fill="none" stroke="#006ce0" stroke-width="2.2" stroke-linejoin="round"><path d="M5.6 1.1H1.1v13.8h13.8V10"/><path d="M8.6 1.1h6.3v6.6"/><path d="M7.8 8.2l6.6-6.6"/></g></svg><div style="position:absolute;left:2049.60px;top:1517.11px;font:normal 400 24px/24px 'Liberation Mono';color:#0f141a;white-space:pre;-webkit-text-stroke:0.4px #0f141a;">dev</div><div style="position:absolute;left:2229.60px;top:1517.11px;font:normal 400 24px/24px 'Liberation Mono';color:#0f141a;white-space:pre;-webkit-text-stroke:0.4px #0f141a;">200</div><div style="position:absolute;left:2408.40px;top:1517.11px;font:normal 400 24px/24px 'Liberation Mono';color:#0f141a;white-space:pre;-webkit-text-stroke:0.4px #0f141a;">1865 ms</div><div style="position:absolute;left:2589.50px;top:1517.11px;font:normal 400 24px/24px 'Liberation Mono';color:#0f141a;white-space:pre;-webkit-text-stroke:0.4px #0f141a;">4abf96d69c04ed…</div><svg style="position:absolute;left:58px;top:1573px;" width="17" height="20" viewBox="0 0 17 20"><path d="M1.5 1.5L15.5 10L1.5 18.5Z" fill="#0f141a" stroke="#0f141a" stroke-width="2" stroke-linejoin="round"/></svg><div style="position:absolute;left:98.00px;top:1571.61px;font:normal 400 24px/24px 'Liberation Mono';color:#0f141a;white-space:pre;-webkit-text-stroke:0.4px #0f141a;">3</div><div style="position:absolute;left:222.76px;top:1569.56px;font:normal 400 24.5px/24.5px 'Liberation Sans';color:#006ce0;white-space:pre;transform:scaleX(1.0356);transform-origin:0 0;-webkit-text-stroke:0.45px #006ce0;">68f619ec8d8b5cf88da81e30ef4f8fde</div><div style="position:absolute;left:223px;top:1595px;width:419px;height:2px;background:#006ce0"></div><svg style="position:absolute;left:645px;top:1567.5px;" width="27" height="27" viewBox="0 0 16 16"><g fill="none" stroke="#006ce0" stroke-width="2.2" stroke-linejoin="round"><path d="M5.6 1.1H1.1v13.8h13.8V10"/><path d="M8.6 1.1h6.3v6.6"/><path d="M7.8 8.2l6.6-6.6"/></g></svg><div style="position:absolute;left:703.50px;top:1571.61px;font:normal 400 24px/24px 'Liberation Mono';color:#0f141a;white-space:pre;-webkit-text-stroke:0.4px #0f141a;">GET /lambda</div><div style="position:absolute;left:1167.00px;top:1571.61px;font:normal 400 24px/24px 'Liberation Mono';color:#0f141a;white-space:pre;-webkit-text-stroke:0.4px #0f141a;">2025-10-20T13:15:58.443+02:00</div><div style="position:absolute;left:1654.01px;top:1569.56px;font:normal 400 24.5px/24.5px 'Liberation Sans';color:#006ce0;white-space:pre;transform:scaleX(0.9942);transform-origin:0 0;-webkit-text-stroke:0.45px #006ce0;">ecs-fargate-dev-ecs</div><div style="position:absolute;left:1654px;top:1595px;width:221px;height:2px;background:#006ce0"></div><svg style="position:absolute;left:1878px;top:1567.5px;" width="27" height="27" viewBox="0 0 16 16"><g fill="none" stroke="#006ce0" stroke-width="2.2" stroke-linejoin="round"><path d="M5.6 1.1H1.1v13.8h13.8V10"/><path d="M8.6 1.1h6.3v6.6"/><path d="M7.8 8.2l6.6-6.6"/></g></svg><div style="position:absolute;left:2049.60px;top:1571.61px;font:normal 400 24px/24px 'Liberation Mono';color:#0f141a;white-space:pre;-webkit-text-stroke:0.4px #0f141a;">dev</div><div style="position:absolute;left:2229.60px;top:1571.61px;font:normal 400 24px/24px 'Liberation Mono';color:#0f141a;white-space:pre;-webkit-text-stroke:0.4px #0f141a;">200</div><div style="position:absolute;left:2408.40px;top:1571.61px;font:normal 400 24px/24px 'Liberation Mono';color:#0f141a;white-space:pre;-webkit-text-stroke:0.4px #0f141a;">1870 ms</div><div style="position:absolute;left:2589.50px;top:1571.61px;font:normal 400 24px/24px 'Liberation Mono';color:#0f141a;white-space:pre;-webkit-text-stroke:0.4px #0f141a;">e9f7dc54181778…</div><div style="position:absolute;left:2820px;top:1440px;width:439px;height:170px;overflow:hidden"><div style="position:absolute;left:19.80px;top:22.61px;font:normal 400 24px/24px 'Liberation Mono';color:#0f141a;white-space:pre;-webkit-text-stroke:0.4px #0f141a;">{&quot;resource&quot;:{&quot;attributes&quot;:{&quot;aws</div><div style="position:absolute;left:19.80px;top:77.11px;font:normal 400 24px/24px 'Liberation Mono';color:#0f141a;white-space:pre;-webkit-text-stroke:0.4px #0f141a;">{&quot;resource&quot;:{&quot;attributes&quot;:{&quot;clo</div><div style="position:absolute;left:19.80px;top:131.61px;font:normal 400 24px/24px 'Liberation Mono';color:#0f141a;white-space:pre;-webkit-text-stroke:0.4px #0f141a;">{&quot;resource&quot;:{&quot;attributes&quot;:{&quot;aws</div></div></div>
</body></html>
